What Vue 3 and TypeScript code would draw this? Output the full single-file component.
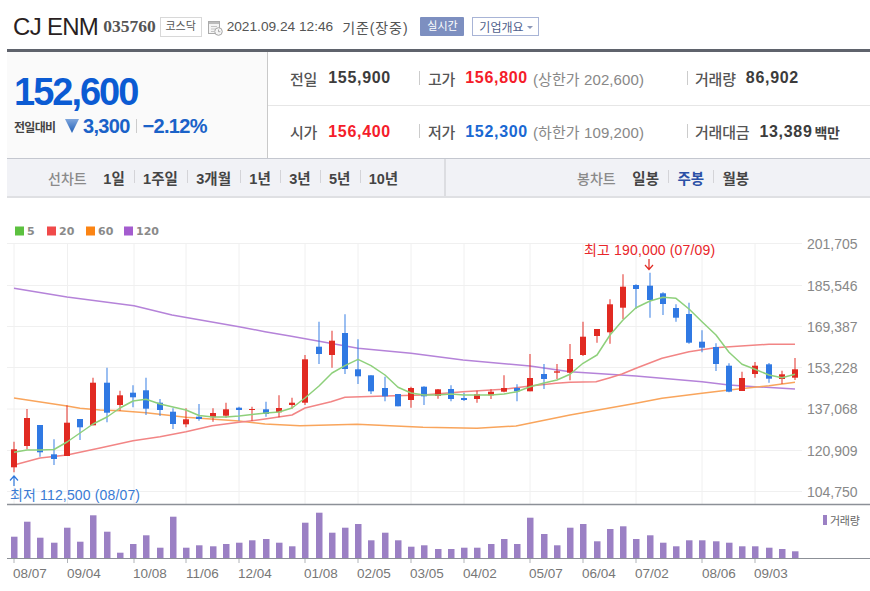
<script setup lang="ts">
type Candle = [high: number, top: number, bottom: number, low: number, up: boolean];

const candles: Candle[] = [
  [441.7, 449.3, 467.3, 472.3, true], [409, 418, 446, 449.3, true], [425, 425, 452.3, 456.7, false],
  [439.3, 454.3, 459, 465, false], [405.3, 422.7, 456, 456, true], [419, 419, 427.3, 440, false],
  [377.7, 382.7, 425.3, 425.3, true], [367.7, 382.7, 412.7, 422.3, false], [390.7, 395.3, 405, 410.7, true],
  [385.3, 392.7, 397.3, 407.3, false], [377.7, 390.3, 408.7, 415, false], [399, 402.7, 410, 416, false],
  [408.3, 411.7, 424, 429, false], [408.3, 419.3, 424.3, 427.3, true], [404, 416.7, 419, 420.7, false],
  [408.3, 413, 417.3, 421.7, true], [402.7, 409.3, 415.7, 417.7, true], [406.7, 407.7, 410, 420.7, false],
  [406.7, 409, 410, 420.7, true], [401.7, 409.3, 414, 416.7, false], [395.3, 408, 412.3, 417.3, true],
  [397.7, 402.7, 405, 408.7, true], [355, 359.3, 402.7, 405, true], [321.7, 346.7, 354, 364, false],
  [330.7, 340.7, 355, 367.7, true], [314.3, 333, 369, 374, false], [339.3, 369.3, 376.3, 384, false],
  [375.3, 375.3, 391.3, 394, false], [376.7, 388, 396.3, 401.3, false], [394, 394, 406.3, 406.3, false],
  [386.7, 388, 400, 407.7, true], [386.3, 386.7, 396.3, 405, false], [389, 389.3, 396, 398.7, true],
  [385.3, 389, 399, 401.3, false], [392.7, 398, 400, 401, false], [390.7, 394.3, 399, 402.7, true],
  [389.3, 391.7, 395.3, 399, true], [375.3, 388, 391.7, 392.3, true], [384.3, 388, 391.3, 401.3, false],
  [354, 378, 391.3, 391.3, true], [364, 374, 379, 389, false], [364, 371.3, 372.7, 379, true],
  [344, 359, 372.7, 380.3, true], [321.7, 336.7, 355, 356, true], [329, 329, 336, 342.7, true],
  [299.3, 304.3, 332.3, 343.7, true], [274.3, 286.7, 307.7, 319, true], [284.3, 285, 289, 309, false],
  [272.7, 285.7, 300, 317.7, false], [292.3, 293.3, 304, 315, false], [304.3, 308, 317.7, 321.7, false],
  [302.7, 314, 342.7, 343.7, false], [330.3, 341.7, 347.7, 352.3, false], [343.3, 347, 364, 371, false],
  [363.3, 365.7, 391.7, 392.3, false], [371.7, 378, 391, 391, true], [362, 365.7, 374, 377.7, true],
  [363, 364.3, 378.7, 382.7, false], [370.7, 374.3, 379, 384, true], [358, 369.3, 377.7, 380, true],
];

const volumeTops = [
  536.7, 521.7, 537.7, 542.7, 527.7, 541.7, 515.3, 531.7, 552.7, 544, 535.3, 547.7, 516.7, 547.7, 545.3, 546.3,
  544, 542.7, 540.3, 539, 542.7, 546.3, 522.7, 512.7, 532.7, 527.7, 524, 540.3, 532.7, 540.3, 546.7, 545.3,
  549, 549, 547.7, 547.7, 544, 539, 544, 517.7, 534, 545.3, 527.7, 524, 541.3, 529, 526.3, 539, 535.3, 542.7,
  546.3, 540.3, 540.3, 541.3, 542.7, 546.3, 546.3, 547.7, 549, 551.3,
];

const xAt = (i: number) => Math.round(14 + i * 13.24);

const ma5 = [
  452.3, 450, 450, 449.5, 442, 433, 424, 417, 408, 401, 399.3, 404, 407, 410, 415.5, 417, 417, 416, 414.5, 413, 412, 408,
  398, 386, 373, 365.7, 359.3, 365.7, 375, 387.3, 393, 395, 395, 394, 395, 395, 395, 394, 391.7, 386.7, 383, 380,
  374.3, 363.3, 355, 335, 320, 307.7, 301, 297.3, 298.3, 309, 321.7, 335, 352.3, 364.3, 369.3, 375, 377.7, 374.3,
];

const ma20 = "14,465 40,458 67,455 100,448 133,440.7 160,436.7 186,431.7 212,425.7 239,422.3 265,419 292,415 305,408 331,401.7 345,397.3 385,396 423,395 463,391.7 503,389.3 530,386 556,383.3 570,382.3 596,381.7 610,377.7 622,374 636,368.3 662,358.3 689,351.7 715,347.7 741,346 769,344.3 795,344.3";
const ma60 = "14,398 67,406 80,408.3 100,410 120,410.7 146,412.7 186,417.3 239,421 265,424 300,425.7 357,424.3 423,427.3 477,428.3 516,426 570,415 636,403.3 662,398.3 702,393.3 729,390 769,385.7 795,382.3";
const ma120 = "14,288.3 67,297 134,305.7 172,315 239,326.7 265,331.7 290,336 358,348.3 411,353.3 463,360 530,366 570,371.7 636,376 702,381.7 729,385 755,386.7 795,389";

const grid = { xs: [14, 67.5, 134, 186, 239, 305, 358, 411, 464, 530, 583, 636, 702, 755], ys: [243.5, 285.5, 326.5, 367.5, 409, 450.5, 491.5] };
const yLabels = [
  ["201,705", 249], ["185,546", 290.5], ["169,387", 331.5], ["153,228", 372.5],
  ["137,068", 414], ["120,909", 456], ["104,750", 497],
] as const;
const xLabels = [
  ["08/07", 14], ["09/04", 68], ["10/08", 134], ["11/06", 187], ["12/04", 239], ["01/08", 305], ["02/05", 358],
  ["03/05", 411], ["04/02", 464], ["05/07", 530], ["06/04", 583], ["07/02", 636], ["08/06", 703], ["09/03", 755],
] as const;
const legend = [
  { label: "5", color: "#5cc13f", x: 15 },
  { label: "20", color: "#f04a4a", x: 47 },
  { label: "60", color: "#fb8413", x: 86 },
  { label: "120", color: "#a45ccf", x: 124 },
];

const rangeTabs = ["1일", "1주일", "3개월", "1년", "3년", "5년", "10년"];
const periodTabs = ["일봉", "주봉", "월봉"];

const ma5Points = ma5.map((y, i) => `${xAt(i)},${y}`).join(" ");
</script>

<template>
  <div class="page">
    <header class="head">
      <h1 class="name">CJ ENM</h1>
      <span class="code">035760</span>
      <span class="market">코스닥</span>
      <svg class="cal" width="15" height="16" viewBox="0 0 15 16">
        <rect x="0.5" y="1.5" width="11" height="12" fill="#f4f4f4" stroke="#aaa" />
        <rect x="1" y="2" width="10" height="2" fill="#bbb" />
        <path d="M3 6.5h6M3 9h4M3 11.5h3" stroke="#c4c4c4" />
        <circle cx="10.5" cy="11.5" r="3.8" fill="#f6f6f6" stroke="#a5a5a5" />
        <path d="M10.5 9.5v2.2h1.8" fill="none" stroke="#999" stroke-width="0.8" />
      </svg>
      <span class="date">2021.09.24 12:46</span>
      <span class="basis">기준(장중)</span>
      <span class="live">실시간</span>
      <span class="overview">기업개요<i class="caret" /></span>
    </header>

    <section class="summary">
      <div class="now">
        <strong class="price">152,600</strong>
        <div class="change">
          <span class="change-label">전일대비</span>
          <svg class="tri" width="14" height="14" viewBox="0 0 14 14">
            <defs>
              <linearGradient id="tri-fill" x1="0" y1="0" x2="0" y2="1">
                <stop offset="0" stop-color="#7fa6dc" />
                <stop offset="1" stop-color="#1f5fb8" />
              </linearGradient>
            </defs>
            <path d="M0 0h14L7 14z" fill="url(#tri-fill)" />
          </svg>
          <span class="change-num">3,300</span>
          <i class="change-sep" />
          <span class="change-num pct">−2.12%</span>
        </div>
      </div>
      <div class="quotes">
        <div class="row">
          <div class="cell c1"><span class="lbl">전일</span><b class="val">155,900</b></div>
          <div class="cell c2"><span class="lbl">고가</span><b class="val red">156,800</b><span class="limit">(상한가 202,600)</span></div>
          <div class="cell c3"><span class="lbl">거래량</span><b class="val">86,902</b></div>
        </div>
        <div class="row">
          <div class="cell c1"><span class="lbl">시가</span><b class="val red">156,400</b></div>
          <div class="cell c2"><span class="lbl">저가</span><b class="val blue">152,300</b><span class="limit">(하한가 109,200)</span></div>
          <div class="cell c3"><span class="lbl">거래대금</span><b class="val">13,389</b><span class="unit">백만</span></div>
        </div>
      </div>
    </section>

    <nav class="tabs">
      <div class="tab-group left">
        <span class="tab-title">선차트</span>
        <span v-for="t in rangeTabs" :key="t" class="tab">{{ t }}</span>
      </div>
      <div class="tab-group right">
        <span class="tab-title">봉차트</span>
        <span v-for="t in periodTabs" :key="t" class="tab" :class="{ on: t === '주봉' }">{{ t }}</span>
      </div>
    </nav>

    <svg class="chart" width="870" height="393" viewBox="0 198 870 393">
      <g v-for="m in legend" :key="m.label">
        <rect :x="m.x" y="226.5" width="9" height="9" :fill="m.color" />
        <text :x="m.x + 12" y="235" class="legend">{{ m.label }}</text>
      </g>

      <g stroke="#f0f0f0" stroke-width="1">
        <line v-for="y in grid.ys" :key="y" x1="7" x2="802" :y1="y" :y2="y" />
        <line v-for="x in grid.xs" :key="x" :x1="x" :x2="x" y1="243" y2="504" />
      </g>

      <g fill="none" stroke-width="1.5" stroke-linejoin="round">
        <polyline :points="ma120" stroke="#b583d9" />
        <polyline :points="ma60" stroke="#f9a55c" />
        <polyline :points="ma20" stroke="#f28585" />
      </g>

      <g v-for="(c, i) in candles" :key="i" :fill="c[4] ? '#e12a22' : '#3079e3'" :stroke="c[4] ? '#e12a22' : '#3079e3'">
        <line :x1="xAt(i)" :x2="xAt(i)" :y1="c[0]" :y2="c[3]" stroke-opacity="0.75" stroke-width="1.3" />
        <rect :x="xAt(i) - 3" :y="c[1]" width="6" :height="Math.max(c[2] - c[1], 1)" stroke="none" />
      </g>

      <polyline :points="ma5Points" fill="none" stroke="#8ed07b" stroke-width="1.5" stroke-linejoin="round" />

      <text x="584" y="255" class="note high">최고 190,000 (07/09)</text>
      <path d="M649 259v10M645 265l4 4.500 4-4.500" fill="none" stroke="#e12a22" stroke-width="1.2" />
      <text x="10" y="500" class="note low">최저 112,500 (08/07)</text>
      <path d="M14 486v-10M10 480.500l4-4.500 4 4.500" fill="none" stroke="#2f78dc" stroke-width="1.2" />

      <text v-for="l in yLabels" :key="l[0]" x="807" :y="l[1]" class="axis">{{ l[0] }}</text>

      <line x1="7" x2="870" y1="504.5" y2="504.5" stroke="#8c9097" stroke-width="1.3" />

      <rect v-for="(top, i) in volumeTops" :key="i" :x="xAt(i) - 3" :y="top" width="6.500" :height="558 - top" fill="#9b80c4" />
      <rect x="823" y="515" width="4" height="10" fill="#9b80c4" />
      <text x="830" y="524.500" class="vol-label">거래량</text>
      <line x1="7" x2="870" y1="558.5" y2="558.5" stroke="#8c9097" />
      <g stroke="#b0b3b8">
        <line v-for="x in grid.xs" :key="x" :x1="x" :x2="x" y1="559" y2="563" />
      </g>
      <text v-for="l in xLabels" :key="l[0]" :x="l[1] - 1" y="578" class="axis small">{{ l[0] }}</text>
    </svg>
  </div>
</template>

<style scoped>
.page {
  width: 870px;
  height: 591px;
  overflow: hidden;
  background: #fff;
  font-family: "Liberation Sans", "Noto Sans CJK KR", sans-serif;
  color: #333;
}

.head {
  display: flex;
  align-items: center;
  height: 49px;
  padding: 4px 0 0 13px;
  box-sizing: border-box;
  white-space: nowrap;
}
.name {
  margin: 0;
  font-size: 24px;
  font-weight: 400;
  letter-spacing: -0.7px;
  color: #2a1f22;
}
.code {
  margin-left: 5px;
  font-family: "Liberation Serif", serif;
  font-size: 17.5px;
  font-weight: 700;
  color: #555;
}
.market {
  display: block;
  width: 42px;
  height: 20px;
  margin-left: 4px;
  border: 1px solid #d8d8d8;
  box-sizing: border-box;
  font-size: 11px;
  line-height: 17px;
  text-align: center;
  color: #555;
}
.cal {
  margin: 3px 0 0 6px;
}
.date {
  margin-left: 4px;
  font-size: 13.700px;
  color: #555;
}
.basis {
  margin-left: 9px;
  font-size: 14px;
  letter-spacing: 0.9px;
  color: #555;
}
.live {
  width: 44px;
  height: 19px;
  margin-left: 12px;
  border-radius: 1px;
  background: #7d8fc0;
  font-size: 11px;
  line-height: 18px;
  text-align: center;
  color: #fff;
}
.overview {
  display: flex;
  align-items: center;
  justify-content: center;
  gap: 3px;
  width: 67px;
  height: 19px;
  margin-left: 8px;
  border: 1px solid #a8b4d6;
  box-sizing: border-box;
  font-size: 12px;
  color: #4f5f8c;
}
.caret {
  margin-top: 2px;
  border: 3px solid transparent;
  border-top: 3px solid #8b97b8;
  border-bottom: 0;
}

.summary {
  display: flex;
  height: 106px;
  margin-left: 7px;
  border-top: 3px solid #5f636c;
  box-sizing: content-box;
}
.now {
  width: 261px;
  padding: 20px 0 0 7px;
  box-sizing: border-box;
  border-right: 1px solid #c9c9c9;
  background: #fafafa;
}
.price {
  display: block;
  font-size: 38px;
  line-height: 40px;
  letter-spacing: -2px;
  color: #0b5bd3;
}
.change {
  display: flex;
  align-items: center;
  margin-top: 4px;
  height: 20px;
}
.change-label {
  width: 52px;
  font-size: 12px;
  font-weight: 700;
  letter-spacing: -0.7px;
  white-space: nowrap;
  color: #444;
}
.tri {
  margin-left: -1px;
}
.change-num {
  margin-left: 4px;
  font-size: 20px;
  font-weight: 700;
  letter-spacing: -0.7px;
  color: #1a62c8;
}
.change-sep {
  width: 1px;
  height: 14px;
  margin-left: 6px;
  background: #ccc;
}
.pct {
  margin-left: 6px;
}

.quotes {
  flex: 1;
  display: flex;
  flex-direction: column;
}
.row {
  flex: 1;
  display: grid;
  grid-template-columns: 129px 268px 1fr;
  align-items: center;
  padding-left: 22px;
}
.row + .row {
  border-top: 1px solid #e6e6e6;
}
.cell {
  display: flex;
  align-items: center;
  gap: 10px;
  white-space: nowrap;
}
.c1 {
  gap: 11px;
}
.c2,
.c3 {
  position: relative;
  padding-left: 9px;
}
.c3 {
  padding-left: 8px;
}
.c2::before,
.c3::before {
  content: "";
  position: absolute;
  left: 0;
  top: 3px;
  width: 1px;
  height: 14px;
  background: #ccc;
}
.lbl {
  font-size: 15px;
  font-weight: 500;
  letter-spacing: -0.2px;
  color: #555;
}
.val {
  font-size: 16px;
  letter-spacing: 0.7px;
  color: #3c3c3c;
}
.val.red {
  color: #f51c2a;
}
.val.blue {
  color: #1a68d2;
}
.limit {
  margin-left: -5px;
  font-size: 15px;
  letter-spacing: 0.1px;
  color: #888;
}
.unit {
  margin-left: -8px;
  font-size: 14px;
  font-weight: 700;
  letter-spacing: -0.5px;
  color: #444;
}

.tabs {
  display: flex;
  height: 40px;
  margin-left: 7px;
  box-sizing: border-box;
  border-top: 1px solid #c4c7cf;
  border-bottom: 2px solid #dfe0e3;
  background: #f1f2f6;
}
.tab-group {
  display: flex;
  align-items: center;
  white-space: nowrap;
}
.left {
  width: 439px;
  padding-left: 41px;
  box-sizing: border-box;
  border-right: 2px solid #dcdde1;
}
.right {
  padding-left: 131px;
}
.tab-title {
  margin-right: 7.500px;
  font-size: 14px;
  font-weight: 500;
  color: #8a8a8a;
}
.tab {
  position: relative;
  padding: 0 9.200px;
  font-size: 14.500px;
  font-weight: 700;
  color: #444;
}
.tab + .tab::before {
  content: "";
  position: absolute;
  left: 0;
  top: 3px;
  width: 1px;
  height: 13px;
  background: #d4d4d8;
}
.tab.on {
  color: #2a50a6;
}

.chart {
  display: block;
}
.legend {
  font-family: "DejaVu Sans", sans-serif;
  font-size: 11px;
  font-weight: 700;
  fill: #8a8a8a;
}
.note {
  font-size: 14px;
  letter-spacing: 0.15px;
}
.note.high {
  fill: #e8262a;
}
.note.low {
  fill: #3a7bd5;
}
.axis {
  font-size: 14px;
  fill: #888;
}
.axis.small {
  font-size: 13.500px;
  fill: #777;
}
.vol-label {
  font-size: 11px;
  fill: #666;
  letter-spacing: -0.3px;
}
</style>
